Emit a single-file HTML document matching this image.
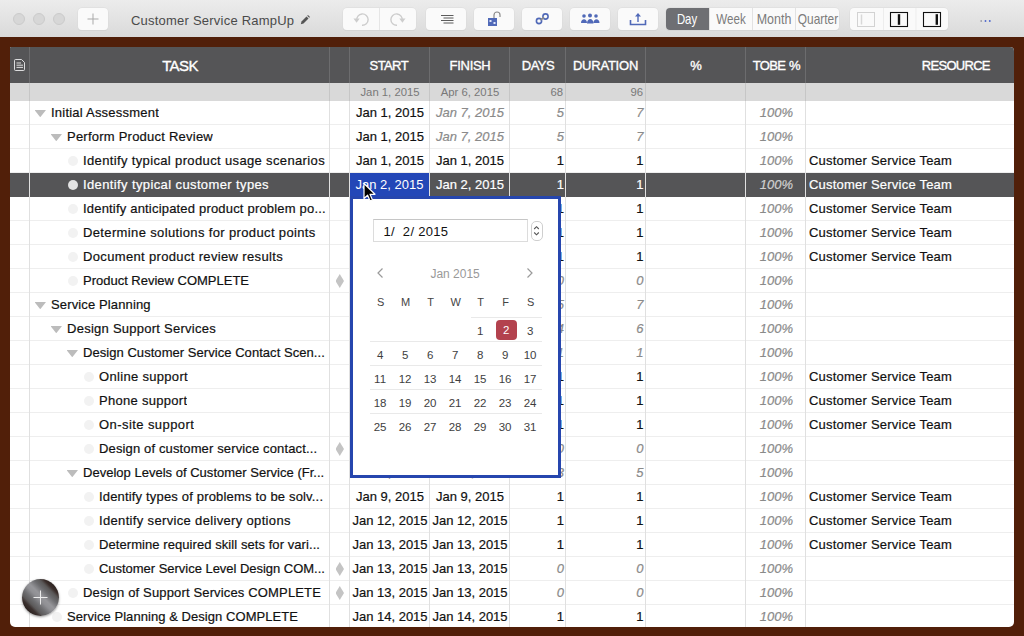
<!DOCTYPE html>
<html><head><meta charset="utf-8"><title>Customer Service RampUp</title>
<style>
*{box-sizing:border-box;margin:0;padding:0}
html,body{width:1024px;height:636px;overflow:hidden}
body{position:relative;background:#511f09;font-family:"Liberation Sans",sans-serif;font-size:13px;color:#111}
i{font-style:normal}
#tb{position:absolute;left:0;top:0;width:1024px;height:37px;background:linear-gradient(#ececec,#dadada)}
.tl{position:absolute;top:13px;width:12px;height:12px;border-radius:6px;background:#d7d7d7;border:1px solid #cbcbcb}
.btn{position:absolute;top:8px;height:22px;background:#fafafa;border-radius:4px;box-shadow:0 0 0 .5px #dadada,0 1px 0 #cfcfcf}
.btn svg{position:absolute;left:0;top:0}
#title{position:absolute;left:131px;top:12.5px;letter-spacing:.22px;font-size:13px;color:#4a4a4a;white-space:nowrap;line-height:16px}
#seg{position:absolute;left:665.6px;top:8px;width:173.4px;height:22px;border-radius:4px;background:#fafafa;box-shadow:0 0 0 .5px #dadada,0 1px 0 #cfcfcf;overflow:hidden}
#seg span{position:absolute;top:0;height:22px;line-height:23px;font-size:14.5px;color:#7c7c7c;border-left:1px solid #e2e2e2}
#seg span b{position:absolute;left:50%;top:0;white-space:nowrap;font-weight:normal;transform-origin:center}
#seg .on{background:#6e6f73;color:#fff;border-left:none}
#tbl{position:absolute;left:10px;top:47px;width:1004px;height:580px;background:#fff;border-radius:1px 4px 5px 5px;overflow:hidden}
#hd{position:absolute;left:0;top:0;width:1004px;height:36px;background:#555557}
#hd span{position:absolute;top:0;height:36px;line-height:38px;color:#fff;font-weight:normal;-webkit-text-stroke:.35px #fff;font-size:13px;text-align:center;white-space:nowrap}
#sm{position:absolute;left:0;top:36px;width:1004px;height:18px;background:#d9d9d9}
#sm span{position:absolute;top:0;line-height:19px;font-size:11.3px;color:#787878;white-space:nowrap}
.vl{position:absolute;top:0;width:1px;height:580px;background:#e0e0e0}
.vlh{position:absolute;top:0;width:1px;height:36px;background:#6c6c6e}
.row{position:absolute;left:0;width:1004px;height:24px;border-bottom:1px solid #eeeeee;line-height:23px;white-space:nowrap;-webkit-text-stroke:.2px}
.row span{position:absolute;top:0;height:23px}
.row.sel{background:#555557;color:#fff;border-bottom-color:#555557}
.tk{max-width:250px;overflow:hidden}
.tri{position:absolute;top:9px;width:11.5px;height:7.2px;background:#bcbcbc;clip-path:polygon(0 0,100% 0,50% 100%);margin-left:-.5px}
.dot{position:absolute;top:7px;width:10px;height:10px;border-radius:5px;background:#f2f2f2;margin-left:1px}
.sel .dot{background:#e3e3e3}
.ms{position:absolute;left:325.5px;top:5px;width:8.5px;height:14px;background:#c4c4c4;clip-path:polygon(50% 0,100% 50%,50% 100%,0 50%);font-size:0;overflow:hidden}
.c{width:80px;text-align:center}
.st{left:340px}.fi{left:420px}
.n{text-align:right}
.dy{left:500px;width:54px}.du{left:556px;width:77.600px}
.it{font-style:italic;color:#8a8a8a}
.tb{left:736px;width:47px;text-align:right;font-style:italic;color:#8a8a8a}
.sel .tb{color:#d0d0d0}
.rs{left:799px;letter-spacing:.22px}
#selc{position:absolute;left:350px;top:173px;width:79px;height:24px;background:#2347b7;color:#fff;line-height:23px;text-align:center}
#pop{position:absolute;left:350px;top:196px;width:211px;height:282px;background:#fff;border:3px solid #2646ae}
#fld{position:absolute;left:19px;top:19px;width:154.500px;height:23px;border:1px solid #dcdcdc;border-top-color:#c6c6c6;background:#fff;font-size:13px;letter-spacing:.3px;line-height:23px;padding-left:9.500px;color:#111;white-space:pre}
#stp{position:absolute;left:176.500px;top:21px;width:12px;height:20px;border:1px solid #cfcfcf;border-radius:5px;background:#fff}
.nav{position:absolute;top:63.5px;font-size:12px;color:#999;line-height:20px}
.wd{position:absolute;top:92px;width:25px;text-align:center;font-size:11px;color:#444;line-height:20px;margin-left:-12px}
.wk{position:absolute;left:16px;width:172px;height:24px;border-top:1px solid #e9e9e9}
.wk .d{position:absolute;top:2.5px;margin-left:-2.5px;width:25px;height:20px;line-height:20px;text-align:center;font-size:11.5px;color:#3e3e3e}
.w0{top:117px;border-top-color:transparent}.w1{top:141px}.w2{top:165px}.w3{top:189px}.w4{top:213px}
.wk .today{color:#fff;background:#b3424e;border-radius:4px;left:128px !important;width:21px;top:2px}
#fab{position:absolute;left:22px;top:578.5px;width:37px;height:37px;border-radius:50%;background:linear-gradient(225deg,#2a211e 14.4%,#3a2e2b 21.5%,#5a5858 27.2%,#6d6d70 35.8%,#96969a 46.4%,#909094 53.6%,#6e6e71 62.8%,#5c5a5a 71.4%,#3c3230 77%,#2a211e 85.6%);box-shadow:0 1px 2.5px rgba(0,0,0,.4)}
</style></head><body>
<div id="tb">
 <i class="tl" style="left:13px"></i><i class="tl" style="left:33px"></i><i class="tl" style="left:53px"></i>
 <div class="btn" style="left:78px;width:30px"><svg width="30" height="22"><path d="M15 5.5v11M9.5 11h11" stroke="#a9a9a9" stroke-width="1" fill="none"/></svg></div>
 <div id="title">Customer Service RampUp</div>
 <svg style="position:absolute;left:300px;top:14.5px" width="10" height="10" viewBox="0 0 12 12"><path d="M1 11l.8-3.2 6-6 2.4 2.4-6 6z" fill="#555"/><path d="M8.6 1l1-1 2.4 2.4-1 1z" fill="#555"/></svg>
 <div class="btn" style="left:343px;width:73px"><svg width="73" height="22"><path d="M36.5 0v22" stroke="#e6e6e6"/><g fill="none" stroke="#cdcdcd" stroke-width="1.4"><path d="M13.8 12.5a5.700 5.700 0 1 1 5.200 4.800"/><path d="M59.200 12.500a5.700 5.700 0 1 0 -5.200 4.800"/></g><path d="M10.500 10.500h6.200l-3.100 4.200z" fill="#cdcdcd"/><path d="M62.500 10.500h-6.200l3.100 4.200z" fill="#cdcdcd"/></svg></div>
 <div class="btn" style="left:426px;width:40px"><svg width="40" height="22"><path d="M15 7.500h12.500M17.500 10h10M15 12.500h12.500M17.500 15h10" stroke="#4a4a4a" stroke-width=".9" fill="none"/></svg></div>
 <div class="btn" style="left:474px;width:40px"><svg width="40" height="22"><rect x="14" y="10" width="9" height="8" fill="#5069b8"/><path d="M20 10V7a3 3 0 0 1 6 0v2" stroke="#8a8a8a" stroke-width="1.2" fill="none"/><path d="M15.5 12h2v2h-2zM19.5 14h2v2h-2z" fill="#dfe6fa"/></svg></div>
 <div class="btn" style="left:522px;width:40px"><svg width="40" height="22"><g fill="none" stroke="#5069b8" stroke-width="1.6"><circle cx="17" cy="13" r="2.6"/><circle cx="23.5" cy="8.5" r="2.6"/></g><path d="M18.5 12l3.5-2.5" stroke="#8a8a8a" stroke-width="1.6"/></svg></div>
 <div class="btn" style="left:570px;width:40px"><svg width="40" height="22"><g fill="#5069b8"><circle cx="14" cy="8" r="1.8"/><circle cx="20" cy="7.5" r="2"/><circle cx="26" cy="8" r="1.8"/><path d="M11 15c0-5 6-5 6 0zM17 15.5c0-6 6.5-6 6.5 0zM23.5 15c0-5 6-5 6 0z"/></g></svg></div>
 <div class="btn" style="left:618px;width:40px"><svg width="40" height="22"><path d="M12.5 12v4.5h15V12" stroke="#5069b8" stroke-width="1.6" fill="none"/><path d="M20 14V7" stroke="#5069b8" stroke-width="1.4"/><path d="M17 8.5l3-3.5 3 3.5z" fill="#5069b8"/></svg></div>
 <div id="seg"><span class="on" style="left:0;width:43.6px"><b style="transform:translateX(-50%) scaleX(.783)">Day</b></span><span style="left:43.6px;width:42.4px"><b style="transform:translateX(-50%) scaleX(.8)">Week</b></span><span style="left:86px;width:43px"><b style="transform:translateX(-50%) scaleX(.86)">Month</b></span><span style="left:129px;width:44.4px"><b style="transform:translateX(-48%) scaleX(.82)">Quarter</b></span></div>
 <div class="btn" style="left:850px;width:98px"><svg width="98" height="22"><path d="M33.5 0v22M66 0v22" stroke="#ededed"/><rect x="7.5" y="4.500" width="17" height="14" fill="none" stroke="#d2d2d2"/><path d="M11.500 6.500v10" stroke="#d8d8d8" stroke-width="1.500"/><rect x="40.500" y="4.500" width="17" height="14" fill="none" stroke="#111" stroke-width="1.100"/><path d="M49 6.200v10.600" stroke="#111" stroke-width="2.400"/><rect x="73.500" y="4.500" width="17" height="14" fill="none" stroke="#111" stroke-width="1.100"/><path d="M86.800 6.200v10.600" stroke="#111" stroke-width="2.400"/></svg></div>
 <svg style="position:absolute;left:979px;top:18.500px" width="14" height="4"><circle cx="2.200" cy="2" r=".9" fill="#9c9ca6"/><circle cx="6.500" cy="2" r=".95" fill="#4f68cc"/><circle cx="10.800" cy="2" r=".95" fill="#4f68cc"/></svg>
</div>
<div id="tbl">
<div class="row" style="top:54px"><i class="tri" style="left:25px"></i><span class="tk" style="left:41px;letter-spacing:0.220px">Initial Assessment</span><span class="c st">Jan 1, 2015</span><span class="c fi it">Jan 7, 2015</span><span class="n dy it">5</span><span class="n du it">7</span><span class="tb">100%</span></div>
<div class="row" style="top:78px"><i class="tri" style="left:41px"></i><span class="tk" style="left:57px;letter-spacing:0.232px">Perform Product Review</span><span class="c st">Jan 1, 2015</span><span class="c fi it">Jan 7, 2015</span><span class="n dy it">5</span><span class="n du it">7</span><span class="tb">100%</span></div>
<div class="row" style="top:102px"><i class="dot" style="left:57px"></i><span class="tk" style="left:73px;letter-spacing:0.359px">Identify typical product usage scenarios</span><span class="c st">Jan 1, 2015</span><span class="c fi">Jan 1, 2015</span><span class="n dy">1</span><span class="n du">1</span><span class="tb">100%</span><span class="rs">Customer Service Team</span></div>
<div class="row sel" style="top:126px"><i class="dot" style="left:57px"></i><span class="tk" style="left:73px;letter-spacing:0.383px">Identify typical customer types</span><span class="c st">Jan 2, 2015</span><span class="c fi">Jan 2, 2015</span><span class="n dy">1</span><span class="n du">1</span><span class="tb">100%</span><span class="rs">Customer Service Team</span></div>
<div class="row" style="top:150px"><i class="dot" style="left:57px"></i><span class="tk" style="left:73px;letter-spacing:0.189px">Identify anticipated product problem po...</span><span class="c st">Jan 5, 2015</span><span class="c fi">Jan 5, 2015</span><span class="n dy">1</span><span class="n du">1</span><span class="tb">100%</span><span class="rs">Customer Service Team</span></div>
<div class="row" style="top:174px"><i class="dot" style="left:57px"></i><span class="tk" style="left:73px;letter-spacing:0.362px">Determine solutions for product points</span><span class="c st">Jan 6, 2015</span><span class="c fi">Jan 6, 2015</span><span class="n dy">1</span><span class="n du">1</span><span class="tb">100%</span><span class="rs">Customer Service Team</span></div>
<div class="row" style="top:198px"><i class="dot" style="left:57px"></i><span class="tk" style="left:73px;letter-spacing:0.345px">Document product review results</span><span class="c st">Jan 7, 2015</span><span class="c fi">Jan 7, 2015</span><span class="n dy">1</span><span class="n du">1</span><span class="tb">100%</span><span class="rs">Customer Service Team</span></div>
<div class="row" style="top:222px"><i class="dot" style="left:57px"></i><span class="tk" style="left:73px;letter-spacing:-0.007px">Product Review COMPLETE</span><i class="ms">&#9670;</i><span class="c st">Jan 7, 2015</span><span class="c fi">Jan 7, 2015</span><span class="n dy it">0</span><span class="n du it">0</span><span class="tb">100%</span></div>
<div class="row" style="top:246px"><i class="tri" style="left:25px"></i><span class="tk" style="left:41px;letter-spacing:0.134px">Service Planning</span><span class="c st">Jan 8, 2015</span><span class="c fi it">Jan 14, 2015</span><span class="n dy it">5</span><span class="n du it">7</span><span class="tb">100%</span></div>
<div class="row" style="top:270px"><i class="tri" style="left:41px"></i><span class="tk" style="left:57px;letter-spacing:0.257px">Design Support Services</span><span class="c st">Jan 8, 2015</span><span class="c fi it">Jan 13, 2015</span><span class="n dy it">4</span><span class="n du it">6</span><span class="tb">100%</span></div>
<div class="row" style="top:294px"><i class="tri" style="left:57px"></i><span class="tk" style="left:73px;letter-spacing:0.049px">Design Customer Service Contact Scen...</span><span class="c st">Jan 8, 2015</span><span class="c fi it">Jan 8, 2015</span><span class="n dy it">1</span><span class="n du it">1</span><span class="tb">100%</span></div>
<div class="row" style="top:318px"><i class="dot" style="left:73px"></i><span class="tk" style="left:89px;letter-spacing:0.317px">Online support</span><span class="c st">Jan 8, 2015</span><span class="c fi">Jan 8, 2015</span><span class="n dy">1</span><span class="n du">1</span><span class="tb">100%</span><span class="rs">Customer Service Team</span></div>
<div class="row" style="top:342px"><i class="dot" style="left:73px"></i><span class="tk" style="left:89px;letter-spacing:0.294px">Phone support</span><span class="c st">Jan 8, 2015</span><span class="c fi">Jan 8, 2015</span><span class="n dy">1</span><span class="n du">1</span><span class="tb">100%</span><span class="rs">Customer Service Team</span></div>
<div class="row" style="top:366px"><i class="dot" style="left:73px"></i><span class="tk" style="left:89px;letter-spacing:0.428px">On-site support</span><span class="c st">Jan 8, 2015</span><span class="c fi">Jan 8, 2015</span><span class="n dy">1</span><span class="n du">1</span><span class="tb">100%</span><span class="rs">Customer Service Team</span></div>
<div class="row" style="top:390px"><i class="dot" style="left:73px"></i><span class="tk" style="left:89px;letter-spacing:0.136px">Design of customer service contact...</span><i class="ms">&#9670;</i><span class="c st">Jan 8, 2015</span><span class="c fi">Jan 8, 2015</span><span class="n dy it">0</span><span class="n du it">0</span><span class="tb">100%</span></div>
<div class="row" style="top:414px"><i class="tri" style="left:57px"></i><span class="tk" style="left:73px;letter-spacing:0.015px">Develop Levels of Customer Service (Fr...</span><span class="c st">Jan 9, 2015</span><span class="c fi it">Jan 13, 2015</span><span class="n dy it">3</span><span class="n du it">5</span><span class="tb">100%</span></div>
<div class="row" style="top:438px"><i class="dot" style="left:73px"></i><span class="tk" style="left:89px;letter-spacing:0.173px">Identify types of problems to be solv...</span><span class="c st">Jan 9, 2015</span><span class="c fi">Jan 9, 2015</span><span class="n dy">1</span><span class="n du">1</span><span class="tb">100%</span><span class="rs">Customer Service Team</span></div>
<div class="row" style="top:462px"><i class="dot" style="left:73px"></i><span class="tk" style="left:89px;letter-spacing:0.338px">Identify service delivery options</span><span class="c st">Jan 12, 2015</span><span class="c fi">Jan 12, 2015</span><span class="n dy">1</span><span class="n du">1</span><span class="tb">100%</span><span class="rs">Customer Service Team</span></div>
<div class="row" style="top:486px"><i class="dot" style="left:73px"></i><span class="tk" style="left:89px;letter-spacing:0.069px">Determine required skill sets for vari...</span><span class="c st">Jan 13, 2015</span><span class="c fi">Jan 13, 2015</span><span class="n dy">1</span><span class="n du">1</span><span class="tb">100%</span><span class="rs">Customer Service Team</span></div>
<div class="row" style="top:510px"><i class="dot" style="left:73px"></i><span class="tk" style="left:89px;letter-spacing:-0.029px">Customer Service Level Design COM...</span><i class="ms">&#9670;</i><span class="c st">Jan 13, 2015</span><span class="c fi">Jan 13, 2015</span><span class="n dy it">0</span><span class="n du it">0</span><span class="tb">100%</span></div>
<div class="row" style="top:534px"><i class="dot" style="left:57px"></i><span class="tk" style="left:73px;letter-spacing:0.153px">Design of Support Services COMPLETE</span><i class="ms">&#9670;</i><span class="c st">Jan 13, 2015</span><span class="c fi">Jan 13, 2015</span><span class="n dy it">0</span><span class="n du it">0</span><span class="tb">100%</span></div>
<div class="row" style="top:558px"><i class="dot" style="left:41px"></i><span class="tk" style="left:57px;letter-spacing:0.057px">Service Planning &amp; Design COMPLETE</span><span class="c st">Jan 14, 2015</span><span class="c fi">Jan 14, 2015</span><span class="n dy">1</span><span class="n du">1</span><span class="tb">100%</span></div>
 <div class="vl" style="left:19px"></div><div class="vl" style="left:319px"></div><div class="vl" style="left:339px"></div><div class="vl" style="left:419px"></div><div class="vl" style="left:499px"></div><div class="vl" style="left:555px"></div><div class="vl" style="left:635px"></div><div class="vl" style="left:735px"></div><div class="vl" style="left:795px"></div>
 <div id="hd">
  <svg style="position:absolute;left:4px;top:12px" width="12" height="12"><path d="M1.500 .5h6l3 3v7a1 1 0 0 1-1 1h-8a1 1 0 0 1-1-1v-9a1 1 0 0 1 1-1z" fill="none" stroke="#ececec" stroke-width=".9"/><path d="M2.500 4h4.500M2.500 6.200h6.500M2.500 8.400h6.500" stroke="#ececec" stroke-width=".9"/></svg>
  <span style="left:20px;width:300px;font-size:15px;letter-spacing:-.6px">TASK</span>
  <span style="left:339.3px;width:79px;letter-spacing:-.6px">START</span><span style="left:420px;width:80px;letter-spacing:-.27px">FINISH</span><span style="left:500px;width:56px;letter-spacing:-.54px">DAYS</span><span style="left:556px;width:79px;letter-spacing:-.23px">DURATION</span><span style="left:636px;width:100px">%</span><span style="left:736.3px;width:60px;letter-spacing:-.6px;word-spacing:.5px">TOBE %</span><span style="left:796px;width:183.8px;text-align:right;letter-spacing:-.71px">RESOURCE</span>
  <i class="vlh" style="left:19px"></i><i class="vlh" style="left:319px"></i><i class="vlh" style="left:339px"></i><i class="vlh" style="left:419px"></i><i class="vlh" style="left:499px"></i><i class="vlh" style="left:555px"></i><i class="vlh" style="left:635px"></i><i class="vlh" style="left:735px"></i><i class="vlh" style="left:795px"></i>
 </div>
 <div id="sm"><span style="left:340px;width:80px;text-align:center">Jan 1, 2015</span><span style="left:420px;width:80px;text-align:center">Apr 6, 2015</span><span style="left:500px;width:53px;text-align:right">68</span><span style="left:556px;width:77px;text-align:right">96</span>
 <i class="vl" style="left:19px;height:18px;background:#c6c6c6"></i><i class="vl" style="left:319px;height:18px;background:#c6c6c6"></i><i class="vl" style="left:339px;height:18px;background:#c6c6c6"></i><i class="vl" style="left:419px;height:18px;background:#c6c6c6"></i><i class="vl" style="left:499px;height:18px;background:#c6c6c6"></i><i class="vl" style="left:555px;height:18px;background:#c6c6c6"></i><i class="vl" style="left:635px;height:18px;background:#c6c6c6"></i><i class="vl" style="left:735px;height:18px;background:#c6c6c6"></i><i class="vl" style="left:795px;height:18px;background:#c6c6c6"></i></div>
</div>
<div id="selc">Jan 2, 2015</div>
<div id="pop"><div style="position:absolute;left:1.1px;top:1px">
 <div id="fld">1/  2/ 2015</div>
 <div id="stp"><svg width="9" height="18" style="position:absolute;left:.5px;top:0"><path d="M2.2 7l2.3-2.3 2.3 2.300M2.2 10.500l2.3 2.3 2.3-2.3" stroke="#555" stroke-width="1.1" fill="none"/></svg></div>
 <svg style="position:absolute;left:22px;top:67px" width="8" height="12"><path d="M6.5 1.500L2 6l4.5 4.5" stroke="#9a9a9a" stroke-width="1.2" fill="none"/></svg><span class="nav" style="left:59px;width:84px;text-align:center">Jan 2015</span><svg style="position:absolute;left:172px;top:67px" width="8" height="12"><path d="M1.5 1.500L6 6l-4.5 4.5" stroke="#9a9a9a" stroke-width="1.2" fill="none"/></svg>
 <span class="wd" style="left:26px">S</span><span class="wd" style="left:51px">M</span><span class="wd" style="left:76px">T</span><span class="wd" style="left:101px">W</span><span class="wd" style="left:126px">T</span><span class="wd" style="left:151px">F</span><span class="wd" style="left:176px">S</span>
 <div class="wk w0"><i style="position:absolute;left:101px;top:-1px;width:71px;height:1px;background:#e9e9e9"></i><span class="d" style="left:0px"></span><span class="d" style="left:25px"></span><span class="d" style="left:50px"></span><span class="d" style="left:75px"></span><span class="d" style="left:100px">1</span><span class="d today" style="left:125px">2</span><span class="d" style="left:150px">3</span></div><div class="wk w1"><span class="d" style="left:0px">4</span><span class="d" style="left:25px">5</span><span class="d" style="left:50px">6</span><span class="d" style="left:75px">7</span><span class="d" style="left:100px">8</span><span class="d" style="left:125px">9</span><span class="d" style="left:150px">10</span></div><div class="wk w2"><span class="d" style="left:0px">11</span><span class="d" style="left:25px">12</span><span class="d" style="left:50px">13</span><span class="d" style="left:75px">14</span><span class="d" style="left:100px">15</span><span class="d" style="left:125px">16</span><span class="d" style="left:150px">17</span></div><div class="wk w3"><span class="d" style="left:0px">18</span><span class="d" style="left:25px">19</span><span class="d" style="left:50px">20</span><span class="d" style="left:75px">21</span><span class="d" style="left:100px">22</span><span class="d" style="left:125px">23</span><span class="d" style="left:150px">24</span></div><div class="wk w4"><span class="d" style="left:0px">25</span><span class="d" style="left:25px">26</span><span class="d" style="left:50px">27</span><span class="d" style="left:75px">28</span><span class="d" style="left:100px">29</span><span class="d" style="left:125px">30</span><span class="d" style="left:150px">31</span></div>
</div></div>
<svg style="position:absolute;left:362px;top:181.500px" width="16" height="22"><path d="M2 1.5v15l3.6-3.3 2.5 5.8 2.4-1-2.5-5.700h5z" fill="#000" stroke="#fff" stroke-width="1.2" stroke-linejoin="round"/></svg>
<div id="fab"><svg width="37" height="37"><path d="M18.500 11.500v14M11.500 18.500h14" stroke="#ececec" stroke-width="1"/></svg></div>
</body></html>
